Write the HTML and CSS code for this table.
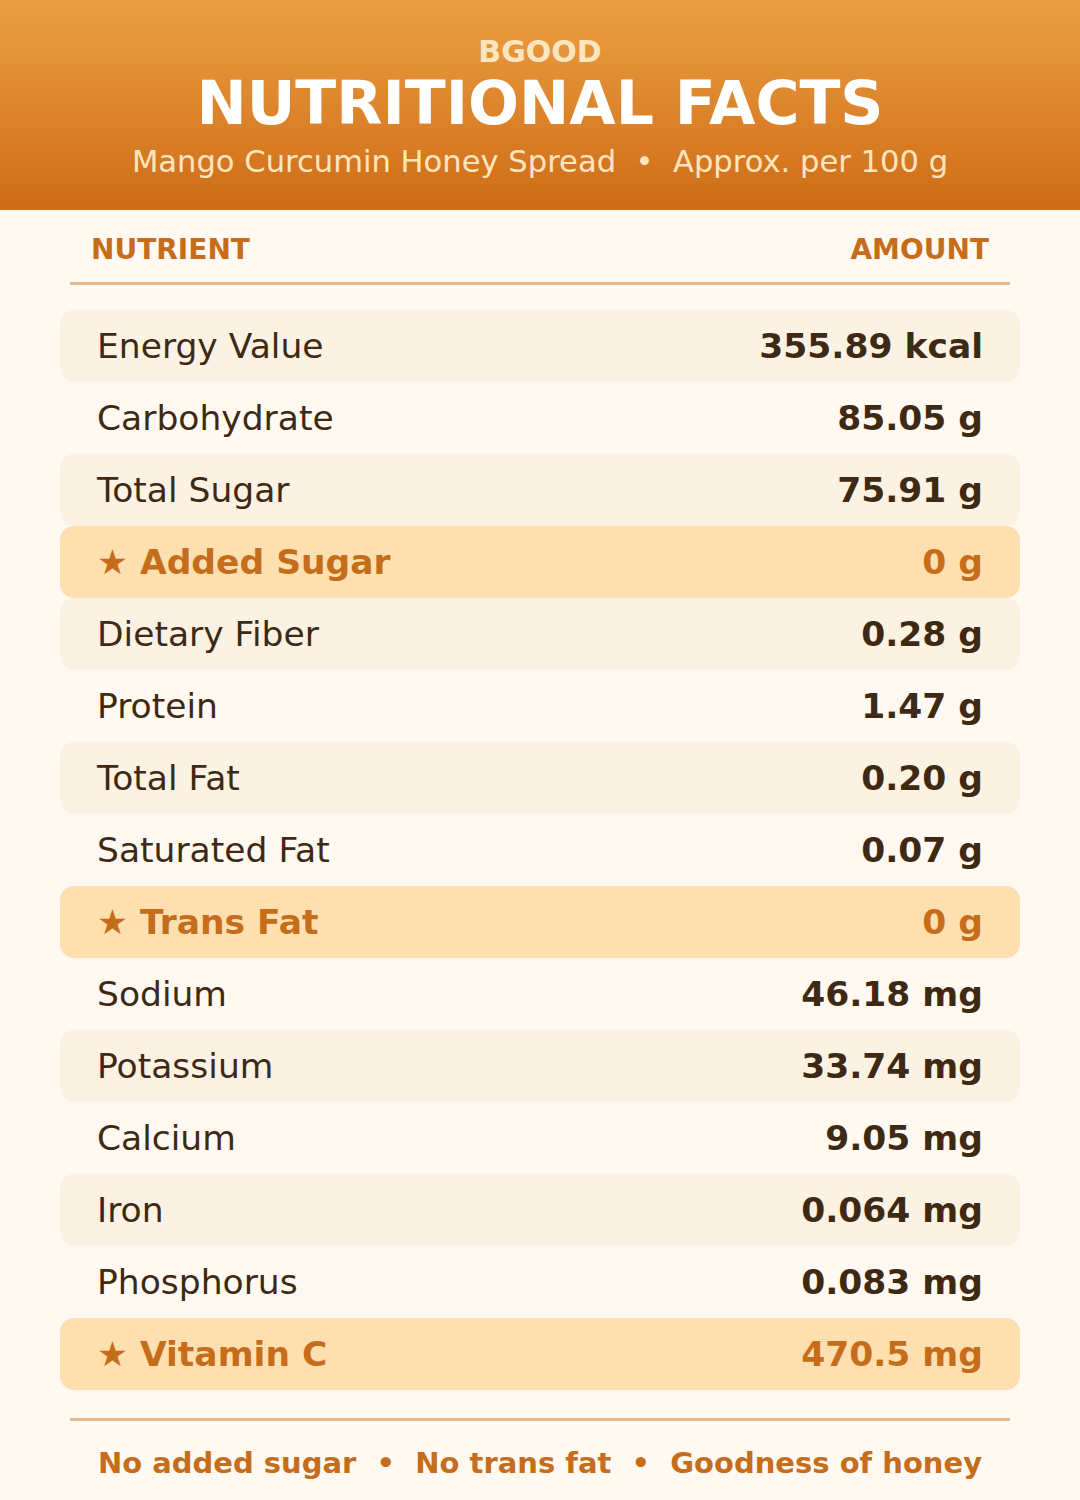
FILE: index.html
```html
<!DOCTYPE html>
<html>
<head>
<meta charset="utf-8">
<link rel="stylesheet" href="styles.css">
</head>
<body>
<header class="hero">
  <div class="brand">BGOOD</div>
  <h1 class="title">NUTRITIONAL FACTS</h1>
  <div class="subtitle">Mango Curcumin Honey Spread &nbsp;•&nbsp; Approx. per 100 g</div>
</header>
<main class="panel">
  <div class="thead">
    <span>NUTRIENT</span>
    <span>AMOUNT</span>
  </div>
  <div class="rows">
    <div class="row"><span class="name">Energy Value</span><span class="val">355.89 kcal</span></div>
    <div class="row"><span class="name">Carbohydrate</span><span class="val">85.05 g</span></div>
    <div class="row"><span class="name">Total Sugar</span><span class="val">75.91 g</span></div>
    <div class="row hl"><span class="name"><span class="star">★</span> Added Sugar</span><span class="val">0 g</span></div>
    <div class="row"><span class="name">Dietary Fiber</span><span class="val">0.28 g</span></div>
    <div class="row"><span class="name">Protein</span><span class="val">1.47 g</span></div>
    <div class="row"><span class="name">Total Fat</span><span class="val">0.20 g</span></div>
    <div class="row"><span class="name">Saturated Fat</span><span class="val">0.07 g</span></div>
    <div class="row hl"><span class="name"><span class="star">★</span> Trans Fat</span><span class="val">0 g</span></div>
    <div class="row"><span class="name">Sodium</span><span class="val">46.18 mg</span></div>
    <div class="row"><span class="name">Potassium</span><span class="val">33.74 mg</span></div>
    <div class="row"><span class="name">Calcium</span><span class="val">9.05 mg</span></div>
    <div class="row"><span class="name">Iron</span><span class="val">0.064 mg</span></div>
    <div class="row"><span class="name">Phosphorus</span><span class="val">0.083 mg</span></div>
    <div class="row hl"><span class="name"><span class="star">★</span> Vitamin C</span><span class="val">470.5 mg</span></div>
  </div>
  <div class="footer">No added sugar &nbsp;•&nbsp; No trans fat &nbsp;•&nbsp; Goodness of honey</div>
</main>
</body>
</html>
```
FILE: styles.css
```css
* { box-sizing: border-box; }
html, body {
  margin: 0;
  padding: 0;
  background: #fff9f2;
  font-family: "DejaVu Sans", sans-serif;
  color: #3e2a14;
}
body { width: 1080px; height: 1500px; overflow: hidden; }
.hero {
  height: 210px;
  background: linear-gradient(180deg, #eca043 0%, #ce6c17 100%);
  display: flex;
  flex-direction: column;
  align-items: center;
  padding-top: 34px;
  text-align: center;
}
.brand {
  font-size: 30px;
  font-weight: bold;
  color: #fde5c0;
  line-height: 36px;
}
.title {
  margin: 0;
  font-size: 60px;
  font-weight: bold;
  color: #ffffff;
  line-height: 66px;
}
.subtitle {
  font-size: 30.6px;
  color: #fde5c0;
  line-height: 38px;
  margin-top: 7px;
}
.panel {
  padding: 0 60px;
}
.thead {
  display: flex;
  justify-content: space-between;
  margin: 0 10px;
  padding: 0 21px;
  height: 75px;
  align-items: center;
  padding-top: 6px;
  border-bottom: 3px solid #e2bb8a;
  font-size: 28px;
  font-weight: bold;
  color: #c56d1a;
}
.rows {
  margin-top: 25px;
  display: flex;
  flex-direction: column;
}
.row {
  height: 72px;
  border-radius: 14px;
  display: flex;
  justify-content: space-between;
  align-items: center;
  padding: 0 37px;
  font-size: 34.5px;
}
.row:nth-child(odd) { background: #fcf2e3; }
.row .val { font-weight: bold; }
.row.hl {
  background: #fee0b0;
  color: #c56d1a;
  font-weight: bold;
}
.star { font-weight: normal; }
.footer {
  margin: 28px 10px 0;
  border-top: 3px solid #e2bb8a;
  padding-top: 25px;
  text-align: center;
  font-size: 29px;
  font-weight: bold;
  color: #c56d1a;
}
```
